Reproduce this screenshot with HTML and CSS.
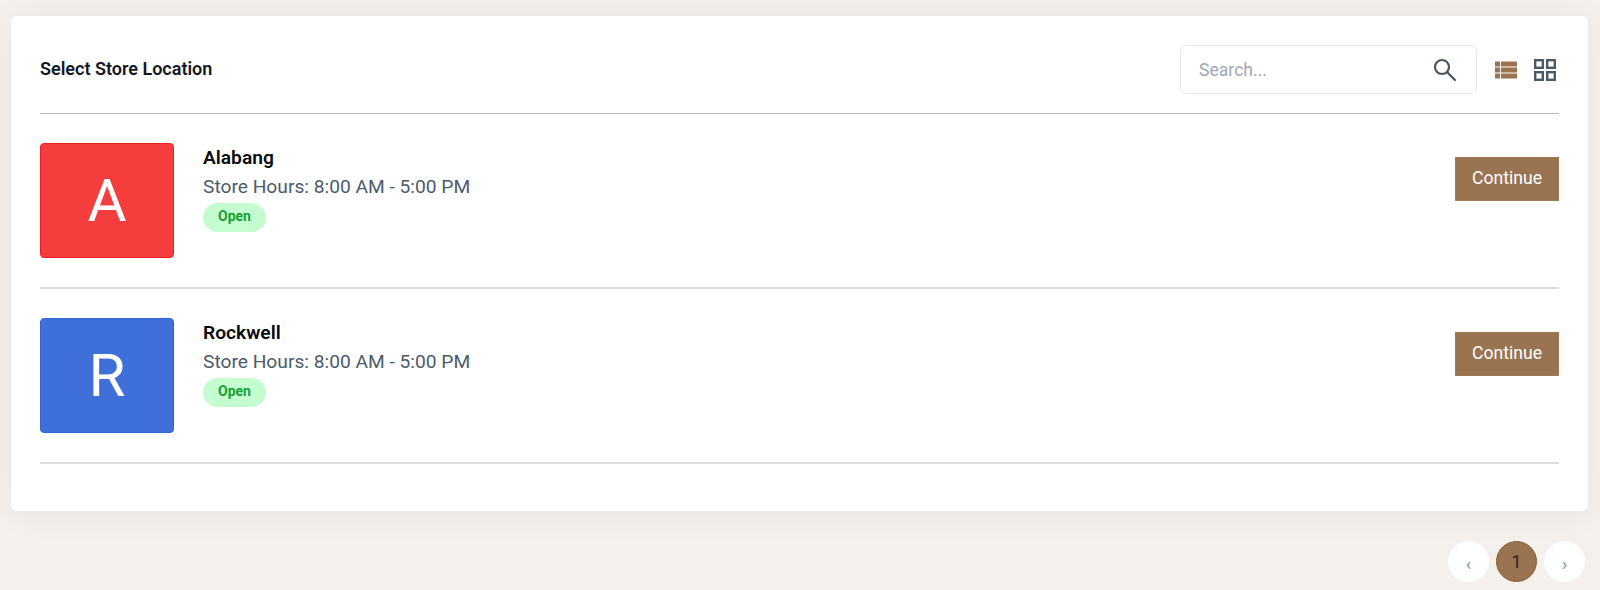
FILE: index.html
```html
<!DOCTYPE html>
<html lang="en">
<head>
    <meta charset="UTF-8">
    <meta name="viewport" content="width=device-width, initial-scale=1.0">
    <title>Select Store Location</title>
    <link rel="stylesheet" href="styles.css">
</head>
<body>

<div class="card">
    <!-- Header with search and view toggles -->
    <div class="card-header">
        <h1>Select Store Location</h1>
        <div class="header-tools">
            <div class="search-box">
                <span class="search-text">Search...</span>
                <svg class="search-icon" width="24" height="24" viewBox="0 0 24 24" fill="none" stroke="#4a5560" stroke-width="2.2">
                    <circle cx="9" cy="9" r="7"/>
                    <path d="M14.2 14.2L22 22" stroke-linecap="round"/>
                </svg>
            </div>
            <svg class="view-list" width="22" height="18" viewBox="0 0 22 18" fill="#9a7350">
                <rect x="0" y="0.5" width="5" height="5"/>
                <rect x="6" y="0.5" width="16" height="5"/>
                <rect x="0" y="6.5" width="5" height="5"/>
                <rect x="6" y="6.5" width="16" height="5"/>
                <rect x="0" y="12.5" width="5" height="5"/>
                <rect x="6" y="12.5" width="16" height="5"/>
            </svg>
            <svg class="view-grid" width="22" height="22" viewBox="0 0 22 22" fill="none" stroke="#4a5a68" stroke-width="2.4">
                <rect x="1.2" y="1.2" width="7.6" height="7.6"/>
                <rect x="13.2" y="1.2" width="7.6" height="7.6"/>
                <rect x="1.2" y="13.2" width="7.6" height="7.6"/>
                <rect x="13.2" y="13.2" width="7.6" height="7.6"/>
            </svg>
        </div>
    </div>

    <!-- Store rows -->
    <div class="store-row">
        <div class="store-thumb thumb-red">A</div>
        <div class="store-info">
            <h2>Alabang</h2>
            <p>Store Hours: 8:00 AM - 5:00 PM</p>
            <span class="badge-open">Open</span>
        </div>
        <button class="continue-btn">Continue</button>
    </div>

    <div class="store-row">
        <div class="store-thumb thumb-blue">R</div>
        <div class="store-info">
            <h2>Rockwell</h2>
            <p>Store Hours: 8:00 AM - 5:00 PM</p>
            <span class="badge-open">Open</span>
        </div>
        <button class="continue-btn">Continue</button>
    </div>
</div>

<div class="pagination">
    <span class="page-btn page-arrow">&lsaquo;</span>
    <span class="page-btn page-active">1</span>
    <span class="page-btn page-arrow">&rsaquo;</span>
</div>

</body>
</html>
```

FILE: styles.css
```css
body {
    font-family: Roboto, "Liberation Sans", sans-serif;
    background-color: #f4f1ed;
    margin: 0;
    padding: 16px 12px 0 11px;
    height: 574px;
    overflow: hidden;
}

.card {
    background-color: white;
    border-radius: 6px;
    padding: 0 29px 47px;
    box-shadow: 0 2px 35px rgba(0, 0, 0, 0.06);
}

.card-header {
    display: flex;
    align-items: center;
    justify-content: space-between;
    padding: 29px 0 19px;
    border-bottom: 1px solid #b8b8b8;
}

.card-header h1 {
    margin: 0;
    padding-bottom: 2px;
    font-size: 18px;
    font-weight: 600;
    color: #111827;
}

.header-tools {
    display: flex;
    align-items: center;
}

.search-box {
    display: flex;
    align-items: center;
    justify-content: space-between;
    box-sizing: border-box;
    width: 297px;
    height: 49px;
    padding: 0 19px 0 18px;
    border: 1px solid #e5e7eb;
    border-radius: 6px;
}

.search-text {
    font-size: 17.6px;
    color: #9ca8b6;
}

.view-list {
    margin-left: 18px;
}

.view-grid {
    margin-left: 17px;
    margin-right: 3px;
}

.store-row {
    display: flex;
    align-items: flex-start;
    padding: 29px 0;
    border-bottom: 2px solid #dcdcdc;
}

.store-thumb {
    display: flex;
    align-items: center;
    justify-content: center;
    box-sizing: border-box;
    width: 134px;
    height: 115px;
    border-radius: 4px;
    color: white;
    font-size: 60px;
}

.thumb-red {
    background-color: #f63d3d;
    border: 1px solid #ee2020;
}

.thumb-blue {
    background-color: #3f6fd8;
    border: 1px solid #2f64d8;
}

.store-info {
    flex: 1;
    margin-left: 29px;
}

.store-info h2 {
    margin: 4px 0 6px;
    font-size: 19.2px;
    line-height: 22px;
    font-weight: 600;
    color: #0a0a0a;
}

.store-info p {
    margin: 0 0 4px;
    font-size: 19.2px;
    line-height: 24px;
    color: #4b5b6b;
}

.badge-open {
    display: inline-block;
    padding: 0 15px;
    height: 29px;
    line-height: 27px;
    border-radius: 15px;
    background-color: #c3fdd0;
    color: #16a034;
    font-size: 14px;
    font-weight: 700;
}

.continue-btn {
    margin-top: 14px;
    width: 104px;
    height: 44px;
    padding: 0 0 2px;
    border: 1px solid #a07a55;
    background-color: #9a7350;
    color: white;
    font-family: inherit;
    font-size: 17.6px;
}

.pagination {
    display: flex;
    justify-content: flex-end;
    gap: 7px;
    margin-top: 30px;
    padding-right: 3px;
}

.page-btn {
    display: flex;
    align-items: center;
    justify-content: center;
    box-sizing: border-box;
    width: 41px;
    height: 41px;
    border-radius: 50%;
    background-color: white;
    font-size: 17.6px;
}

.page-arrow {
    color: #7d9ab8;
    font-size: 18px;
    padding-top: 3px;
}

.page-active {
    background-color: #9a7350;
    border: 1px solid #8a6030;
    color: #1a2a3a;
}
```
